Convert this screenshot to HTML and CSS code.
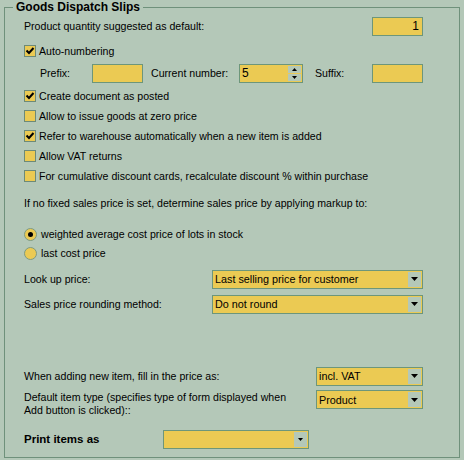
FILE: index.html
```html
<!DOCTYPE html>
<html>
<head>
<meta charset="utf-8">
<link rel="stylesheet" href="styles.css">
</head>
<body>
<fieldset class="group">
  <legend class="title">Goods Dispatch Slips</legend>
  <div class="content">
    <div class="row r-qty">
      <span class="label grow">Product quantity suggested as default:</span>
      <span class="input w51 right">1</span>
    </div>
    <div class="row r-auto">
      <span class="check on"><svg viewBox="0 0 10 10" width="10" height="10"><path d="M1.5 4.5 L4 7 L8.5 2" fill="none" stroke="#000" stroke-width="2"/></svg></span>
      <span class="label">Auto-numbering</span>
    </div>
    <div class="row r-prefix">
      <span class="label prefix-l">Prefix:</span>
      <span class="input w51"></span>
      <span class="label cur-l">Current number:</span>
      <span class="input spin">5
        <span class="spinbtns">
          <span class="sbtn"><svg width="5" height="3" viewBox="0 0 5 3"><path d="M2.5 0 L5 3 L0 3Z" fill="#000"/></svg></span>
          <span class="sbtn"><svg width="5" height="3" viewBox="0 0 5 3"><path d="M0 0 L5 0 L2.5 3Z" fill="#000"/></svg></span>
        </span>
      </span>
      <span class="label suf-l">Suffix:</span>
      <span class="input w51"></span>
    </div>
    <div class="row r-cb1">
      <span class="check on"><svg viewBox="0 0 10 10" width="10" height="10"><path d="M1.5 4.5 L4 7 L8.5 2" fill="none" stroke="#000" stroke-width="2"/></svg></span>
      <span class="label">Create document as posted</span>
    </div>
    <div class="row">
      <span class="check"></span>
      <span class="label">Allow to issue goods at zero price</span>
    </div>
    <div class="row">
      <span class="check on"><svg viewBox="0 0 10 10" width="10" height="10"><path d="M1.5 4.5 L4 7 L8.5 2" fill="none" stroke="#000" stroke-width="2"/></svg></span>
      <span class="label">Refer to warehouse automatically when a new item is added</span>
    </div>
    <div class="row">
      <span class="check"></span>
      <span class="label">Allow VAT returns</span>
    </div>
    <div class="row">
      <span class="check"></span>
      <span class="label">For cumulative discount cards, recalculate discount % within purchase</span>
    </div>
    <div class="row r-markup">
      <span class="label">If no fixed sales price is set, determine sales price by applying markup to:</span>
    </div>
    <div class="row radio-row r-radio1">
      <span class="radio on"><span class="dot"></span></span>
      <span class="label">weighted average cost price of lots in stock</span>
    </div>
    <div class="row radio-row">
      <span class="radio"></span>
      <span class="label">last cost price</span>
    </div>
    <div class="row r-lookup">
      <span class="label col188">Look up price:</span>
      <span class="select w211"><span class="val">Last selling price for customer</span><span class="arrow"><svg width="7" height="4" viewBox="0 0 7 4"><path d="M0 0 L7 0 L3.5 4Z" fill="#000"/></svg></span></span>
    </div>
    <div class="row r-round">
      <span class="label col188">Sales price rounding method:</span>
      <span class="select w211"><span class="val">Do not round</span><span class="arrow"><svg width="7" height="4" viewBox="0 0 7 4"><path d="M0 0 L7 0 L3.5 4Z" fill="#000"/></svg></span></span>
    </div>
    <div class="row r-vat">
      <span class="label col292">When adding new item, fill in the price as:</span>
      <span class="select w107"><span class="val">incl. VAT</span><span class="arrow"><svg width="7" height="4" viewBox="0 0 7 4"><path d="M0 0 L7 0 L3.5 4Z" fill="#000"/></svg></span></span>
    </div>
    <div class="row r-type">
      <span class="label col292 two">Default item type (specifies type of form displayed when Add button is clicked)::</span>
      <span class="select w107"><span class="val">Product</span><span class="arrow"><svg width="7" height="4" viewBox="0 0 7 4"><path d="M0 0 L7 0 L3.5 4Z" fill="#000"/></svg></span></span>
    </div>
    <div class="row r-print">
      <span class="label col139 bold">Print items as</span>
      <span class="select w146"><span class="val"></span><span class="arrow"><svg width="5" height="3" viewBox="0 0 5 3"><path d="M0 0 L5 0 L2.5 3Z" fill="#000"/></svg></span></span>
    </div>
  </div>
</fieldset>
</body>
</html>
```
FILE: styles.css
```css
html, body {
  margin: 0;
  padding: 0;
  background: #b4c8b8;
}
body {
  width: 464px;
  height: 460px;
  overflow: hidden;
  font-family: "Liberation Sans", Arial, sans-serif;
  font-size: 10.6px;
  color: #000;
}
.group {
  box-sizing: border-box;
  margin: 1px 0 0 4px;
  width: 456px;
  height: 457px;
  padding: 0;
  border: 1px solid #6f917b;
}
.title {
  margin-left: 8px;
  padding: 0 3px;
  font-weight: bold;
  font-size: 12px;
  line-height: 13px;
}
.content {
  margin-left: 19px;
  width: 399px;
}
.row {
  display: flex;
  align-items: center;
  height: 20px;
}
.label {
  white-space: nowrap;
  line-height: 13px;
}
.grow { flex: 1; }
.bold { font-weight: bold; font-size: 11.5px; }
.input {
  box-sizing: border-box;
  height: 19px;
  background: #ebca53;
  border: 1px solid #6d967a;
  display: flex;
  align-items: center;
  padding: 0 3px;
  font-size: 12px;
}
.right { justify-content: flex-end; }
.w51 { width: 51px; }
.spin { width: 64px; position: relative; padding-left: 2px; }
.spinbtns {
  position: absolute;
  right: 1px;
  top: 1px;
  bottom: 1px;
  width: 13px;
  display: flex;
  flex-direction: column;
  gap: 1px;
}
.sbtn {
  flex: 1;
  background: #b4c8b8;
  display: flex;
  align-items: center;
  justify-content: center;
}
.prefix-l { margin-left: 16px; width: 52px; }
.cur-l { margin-left: 8px; width: 88px; }
.suf-l { margin-left: 12px; width: 57px; }
.check {
  box-sizing: border-box;
  width: 12px;
  height: 12px;
  border: 1px solid #6d8a77;
  background: #ebca53;
  margin-right: 3px;
  display: flex;
  align-items: center;
  justify-content: center;
}
.radio {
  box-sizing: border-box;
  width: 13px;
  height: 13px;
  border-radius: 50%;
  border: 1px solid #7d9a82;
  background: #ebca53;
  margin-right: 4px;
  display: flex;
  align-items: center;
  justify-content: center;
}
.dot {
  width: 5px;
  height: 5px;
  border-radius: 50%;
  background: #000;
}
.radio-row { height: 19px; }
.select {
  box-sizing: border-box;
  height: 19px;
  background: #ebca53;
  border: 1px solid #6d967a;
  display: flex;
  align-items: stretch;
  font-size: 10.8px;
}
.select .val {
  flex: 1;
  display: flex;
  align-items: center;
  padding-left: 2px;
  white-space: nowrap;
}
.select .arrow {
  width: 13px;
  margin: 1px;
  background: #b4c8b8;
  display: flex;
  align-items: center;
  justify-content: center;
}
.w211 { width: 211px; }
.w107 { width: 107px; }
.w146 { width: 146px; }
.col188 { width: 188px; }
.col292 { width: 292px; }
.col139 { width: 139px; }
.two {
  white-space: normal;
  margin-top: 1px;
  box-sizing: border-box;
  padding-right: 20px;
}
.r-qty { margin-top: 2px; }
.r-auto { margin-top: 5px; }
.r-prefix { margin-top: 2px; }
.r-cb1 { margin-top: 3px; }
.r-markup { margin-top: 7px; }
.r-radio1 { margin-top: 12px; }
.r-lookup { margin-top: 6px; }
.r-round { margin-top: 5px; }
.r-vat { margin-top: 52px; }
.r-type { margin-top: 4px; height: 27px; align-items: flex-start; }
.r-print { margin-top: 12px; }
```
